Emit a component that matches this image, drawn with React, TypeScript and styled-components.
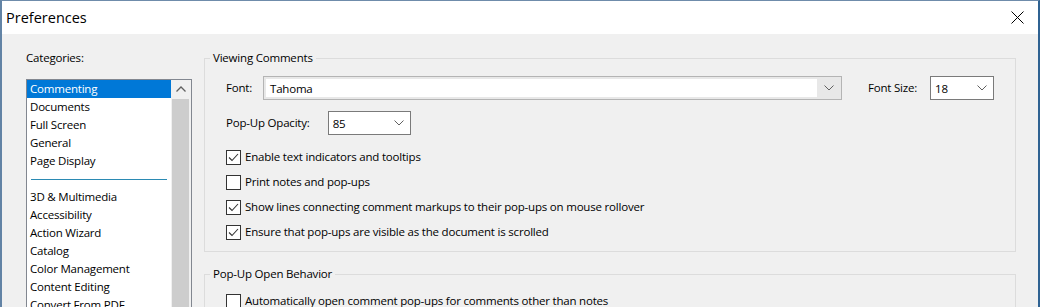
import React from "react";
import styled, { createGlobalStyle } from "styled-components";

const GlobalStyle = createGlobalStyle`
  html, body {
    margin: 0;
    padding: 0;
    background: #f0f0f0;
    overflow: hidden;
  }
  body {
    font-family: "Open Sans", "Noto Sans", sans-serif;
    font-size: 11.5px;
    letter-spacing: -0.2px;
    color: #000;
  }
`;

const Window = styled.div`
  width: 1040px;
  height: 307px;
  box-sizing: border-box;
  border-top: 1px solid #6f8cab;
  border-left: 2px solid #6283a5;
  border-right: 2px solid #2f6292;
  background: #f0f0f0;
  display: flex;
  flex-direction: column;
  overflow: hidden;
`;

const TitleBar = styled.div`
  height: 33px;
  flex: none;
  background: #fff;
  display: flex;
  align-items: center;
  justify-content: space-between;
  padding: 0 14px 0 4px;
`;

const Title = styled.span`
  font-size: 14.5px;
  letter-spacing: 0;
  padding-bottom: 1px;
`;

const Body = styled.div`
  display: flex;
  gap: 12px;
  padding: 16px 22px 0 24px;
`;

const LeftColumn = styled.div`
  width: 166px;
  flex: none;
  display: flex;
  flex-direction: column;
  gap: 13px;
`;

const Label = styled.span`
  line-height: 16px;
  white-space: nowrap;
`;

const ListBox = styled.div`
  height: 260px;
  border: 1px solid #828790;
  background: #fff;
  display: flex;
`;

const Items = styled.div`
  flex: 1;
  display: flex;
  flex-direction: column;
`;

const Item = styled.div<{ selected?: boolean }>`
  height: 18px;
  line-height: 18px;
  padding-left: 3px;
  white-space: nowrap;
  background: ${(p) => (p.selected ? "#0078d7" : "transparent")};
  color: ${(p) => (p.selected ? "#fff" : "#000")};
`;

const Separator = styled.div`
  height: 1px;
  background: #2b8ab3;
  margin: 9px 4px 8px 4px;
`;

const ScrollBar = styled.div`
  width: 20px;
  flex: none;
  background: #f0f0f0;
  display: flex;
  flex-direction: column;
`;

const ScrollArrow = styled.div`
  height: 18px;
  display: flex;
  align-items: center;
  justify-content: center;
`;

const Thumb = styled.div`
  flex: 1;
  margin: 1px 2px 0 1px;
  background: #cdcdcd;
`;

const RightColumn = styled.div`
  flex: 1;
  display: flex;
  flex-direction: column;
  gap: 14px;
`;

const Group = styled.fieldset<{ bottom?: number }>`
  margin: 0;
  border: 1px solid #dcdcdc;
  padding: 0 21px ${(p) => p.bottom ?? 7}px 21px;
  display: flex;
  flex-direction: column;
`;

const Legend = styled.legend`
  margin-left: -16px;
  padding: 0 3px;
  line-height: 16px;
`;

const Row = styled.div<{ top?: number }>`
  display: flex;
  align-items: center;
  margin-top: ${(p) => p.top ?? 0}px;
`;

const CheckList = styled.div<{ top?: number }>`
  display: flex;
  flex-direction: column;
  margin-top: ${(p) => p.top ?? 0}px;
`;

const Combo = styled.div<{ width: number; left: number }>`
  width: ${(p) => p.width}px;
  height: 24px;
  box-sizing: border-box;
  margin-left: ${(p) => p.left}px;
  border: 1px solid #7a7a7a;
  background: #fff;
  display: flex;
  align-items: center;
  padding: 0 6px 0 4px;
  justify-content: space-between;
`;

const EditCombo = styled.div`
  flex: 1;
  height: 24px;
  box-sizing: border-box;
  margin-left: 11px;
  border: 1px solid #b4b4b4;
  background: #e8e8e8;
  display: flex;
  padding: 2px 0 2px 2px;
`;

const EditField = styled.div`
  flex: 1;
  background: #fff;
  display: flex;
  align-items: center;
  padding-left: 4px;
`;

const DropButton = styled.div`
  width: 24px;
  display: flex;
  align-items: center;
  justify-content: center;
`;

const Spacer = styled.div`
  width: 26px;
`;

const CheckRow = styled.label`
  height: 25px;
  display: flex;
  align-items: center;
  gap: 4px;
  white-space: nowrap;
`;

const Box = styled.span`
  width: 15px;
  height: 15px;
  box-sizing: border-box;
  border: 1px solid #333;
  background: #fff;
  display: flex;
  align-items: center;
  justify-content: center;
  flex: none;
  margin-top: 2px;
`;

const Chevron = () => (
  <svg width="10" height="6" viewBox="0 0 10 6">
    <path d="M0.5 0.5 L5 5 L9.5 0.5" fill="none" stroke="#606060" strokeWidth="1" />
  </svg>
);

const Check = ({ checked }: { checked: boolean }) => (
  <Box>
    {checked && (
      <svg width="13" height="13" viewBox="0 0 13 13">
        <path d="M2 6.5 L5 9.5 L11 3" fill="none" stroke="#333" strokeWidth="1.1" />
      </svg>
    )}
  </Box>
);

const topCategories = ["Commenting", "Documents", "Full Screen", "General", "Page Display"];
const moreCategories = [
  "3D & Multimedia",
  "Accessibility",
  "Action Wizard",
  "Catalog",
  "Color Management",
  "Content Editing",
  "Convert From PDF",
  "Convert To PDF",
];

const options = [
  { text: "Enable text indicators and tooltips", checked: true },
  { text: "Print notes and pop-ups", checked: false },
  { text: "Show lines connecting comment markups to their pop-ups on mouse rollover", checked: true },
  { text: "Ensure that pop-ups are visible as the document is scrolled", checked: true },
];

export default function App() {
  return (
    <>
      <GlobalStyle />
      <Window>
        <TitleBar>
          <Title>Preferences</Title>
          <svg width="13" height="13" viewBox="0 0 13 13">
            <path d="M0.5 0.5 L12.5 12.5 M12.5 0.5 L0.5 12.5" stroke="#000" strokeWidth="1" />
          </svg>
        </TitleBar>
        <Body>
          <LeftColumn>
            <Label>Categories:</Label>
            <ListBox>
              <Items>
                {topCategories.map((c, i) => (
                  <Item key={c} selected={i === 0}>
                    {c}
                  </Item>
                ))}
                <Separator />
                {moreCategories.map((c) => (
                  <Item key={c}>{c}</Item>
                ))}
              </Items>
              <ScrollBar>
                <ScrollArrow>
                  <svg width="10" height="6" viewBox="0 0 10 6">
                    <path d="M0.5 5.5 L5 1 L9.5 5.5" fill="none" stroke="#606060" strokeWidth="1.3" />
                  </svg>
                </ScrollArrow>
                <Thumb />
              </ScrollBar>
            </ListBox>
          </LeftColumn>
          <RightColumn>
            <Group>
              <Legend>Viewing Comments</Legend>
              <Row top={10}>
                <Label>Font:</Label>
                <EditCombo>
                  <EditField>Tahoma</EditField>
                  <DropButton>
                    <Chevron />
                  </DropButton>
                </EditCombo>
                <Spacer />
                <Label>Font Size:</Label>
                <Combo width={64} left={13}>
                  <span>18</span>
                  <Chevron />
                </Combo>
              </Row>
              <Row top={11}>
                <Label>Pop-Up Opacity:</Label>
                <Combo width={83} left={18}>
                  <span>85</span>
                  <Chevron />
                </Combo>
              </Row>
              <CheckList top={9}>
                {options.map((o) => (
                  <CheckRow key={o.text}>
                    <Check checked={o.checked} />
                    {o.text}
                  </CheckRow>
                ))}
              </CheckList>
            </Group>
            <Group bottom={40}>
              <Legend>Pop-Up Open Behavior</Legend>
              <CheckList top={6}>
                <CheckRow>
                  <Check checked={false} />
                  Automatically open comment pop-ups for comments other than notes
                </CheckRow>
              </CheckList>
            </Group>
          </RightColumn>
        </Body>
      </Window>
    </>
  );
}
